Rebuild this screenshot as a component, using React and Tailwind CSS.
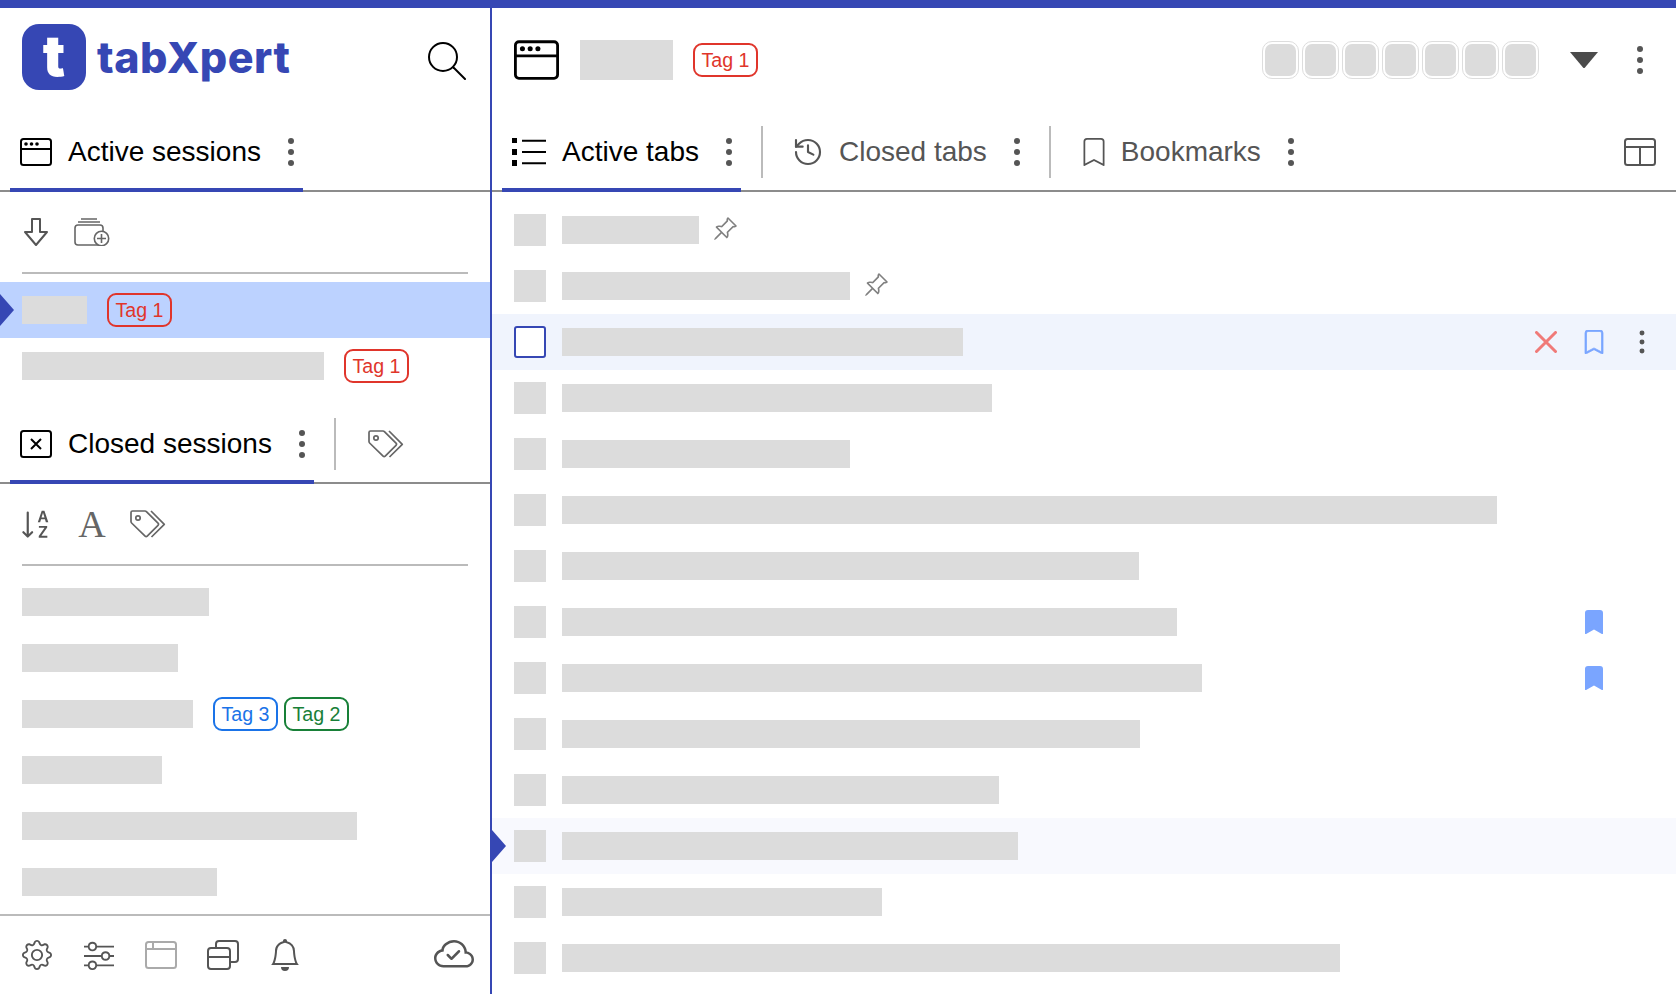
import { BsPinAngle, BsBookmark, BsBookmarkFill, BsGear, BsSliders, BsBell, BsCloudCheck, BsSortAlphaDown } from 'react-icons/bs'
import { History } from 'lucide-react'

function Dots({ className = 'h-[34px] w-6' }) {
  return (
    <svg viewBox="0 0 24 34" className={`shrink-0 fill-[#555] ${className}`}>
      <circle cx="12" cy="6" r="3" />
      <circle cx="12" cy="17" r="3" />
      <circle cx="12" cy="28" r="3" />
    </svg>
  )
}

function WindowIcon({ className = '' }) {
  return (
    <svg viewBox="0 0 32 28" className={`shrink-0 ${className}`} fill="none" stroke="#000" strokeWidth="2">
      <rect x="1" y="1" width="30" height="26" rx="2.5" />
      <path d="M1 11h30" />
      <circle cx="6" cy="6" r="1.8" fill="#000" stroke="none" />
      <circle cx="11.5" cy="6" r="1.8" fill="#000" stroke="none" />
      <circle cx="17" cy="6" r="1.8" fill="#000" stroke="none" />
    </svg>
  )
}

function TagsIcon() {
  return (
    <svg width="36" height="28" viewBox="0 0 36 28" fill="none" stroke="#666" strokeWidth="1.7" strokeLinejoin="round" className="shrink-0">
      <path d="M2.5 1H15a2 2 0 0 1 1.4.6L28 13.2a1.5 1.5 0 0 1 0 2.1L17.2 26.2a1.5 1.5 0 0 1-2.1 0L1.6 13a2 2 0 0 1-.6-1.4V2.5A1.5 1.5 0 0 1 2.5 1Z" />
      <path d="M21 1l13.3 13.3L21.5 27" />
      <circle cx="8" cy="8" r="2.2" />
    </svg>
  )
}

function Tag({ color = 'red', children }) {
  const styles = {
    red: 'border-[#e0352b] text-[#e0352b]',
    blue: 'border-[#1a73e8] text-[#1a73e8]',
    green: 'border-[#188038] text-[#188038]',
  }
  return (
    <span className={`flex h-[34px] w-[65px] shrink-0 items-center justify-center rounded-[9px] border-2 pt-[1px] text-[19.6px] leading-none ${styles[color]}`}>
      {children}
    </span>
  )
}

function Bar({ width, className = '' }) {
  return <div className={`h-7 shrink-0 bg-[#dcdcdc] ${className}`} style={{ width }} />
}

function RowArrow() {
  return (
    <svg width="14" height="32" viewBox="0 0 14 32" className="absolute left-0 top-1/2 -translate-y-1/2 fill-[#3647b4]">
      <path d="M0 0 14 16 0 32Z" />
    </svg>
  )
}

function TabDivider({ className = '' }) {
  return <div className={`mt-[10px] h-[52px] w-[2px] shrink-0 self-start bg-[#bbb] ${className}`} />
}

function Tab({ icon, label, active }) {
  return (
    <div className={`-mb-[2px] flex h-[76px] shrink-0 items-center border-b-4 pl-[10px] ${active ? 'border-[#3647b4] text-black' : 'border-transparent text-[#555]'}`}>
      {icon}
      <span className="ml-4 whitespace-nowrap text-[28px] leading-none">{label}</span>
      <Dots className="ml-[18px] h-[34px] w-6" />
    </div>
  )
}

function Sidebar() {
  const closed = [
    { w: 187 },
    { w: 156 },
    { w: 171, tags: true },
    { w: 140 },
    { w: 335 },
    { w: 195 },
  ]
  return (
    <aside className="flex h-full w-[492px] shrink-0 flex-col border-r-2 border-[#3647b4]">
      <div className="flex h-[108px] shrink-0 items-start justify-between pl-[22px] pr-[24px]">
        <div className="mt-4 flex items-center">
          <div className="flex h-[66px] w-[64px] items-center justify-center rounded-[17px] bg-[#3647b4] font-['Inter',sans-serif] text-[56px] font-black leading-none text-white">
            <span className="-mt-[2px]">t</span>
          </div>
          <span className="ml-[11px] font-['Inter',sans-serif] text-[43px] font-extrabold leading-none tracking-[0.5px] text-[#3647b4]">tabXpert</span>
        </div>
        <svg width="38" height="38" viewBox="0 0 38 38" fill="none" stroke="#000" strokeWidth="2" strokeLinecap="round" className="mt-[34px]">
          <circle cx="15" cy="15" r="14" />
          <path d="M25.5 25.5 37 37" />
        </svg>
      </div>

      <div className="flex h-[76px] shrink-0 border-b-2 border-[#8c8c8c] pl-[10px]">
        <Tab active icon={<WindowIcon className="h-7 w-8" />} label="Active sessions" />
      </div>

      <div className="flex h-[80px] shrink-0 items-center gap-4 pl-4">
        <span className="flex w-10 justify-center">
          <svg width="24" height="28" viewBox="0 0 24 28" fill="none" stroke="#555" strokeWidth="2" strokeLinejoin="round">
            <path d="M8 1h8v13h7L12 27 1 14h7Z" />
          </svg>
        </span>
        <span className="flex w-10 justify-center">
          <svg width="36" height="28" viewBox="0 0 36 28" fill="none" stroke="#666" strokeWidth="1.6">
            <path d="M7 1h16M4 4h22" />
            <rect x="1" y="7" width="28" height="20" rx="3" />
            <circle cx="27.5" cy="20.5" r="7.2" fill="#fff" />
            <path d="M27.5 16v9M23 20.5h9" />
          </svg>
        </span>
      </div>
      <div className="mx-[22px] h-[2px] shrink-0 bg-[#bbb]" />

      <div className="relative mt-2 flex h-14 shrink-0 items-center gap-5 bg-[#bcd2ff] pl-[22px]">
        <RowArrow />
        <Bar width={65} />
        <Tag>Tag 1</Tag>
      </div>
      <div className="flex h-14 shrink-0 items-center gap-5 pl-[22px]">
        <Bar width={302} />
        <Tag>Tag 1</Tag>
      </div>

      <div className="mt-[14px] flex h-[76px] shrink-0 border-b-2 border-[#8c8c8c] pl-[10px]">
        <Tab
          active
          icon={
            <svg viewBox="0 0 32 28" className="h-7 w-8 shrink-0" fill="none" stroke="#000" strokeWidth="2">
              <rect x="1" y="1" width="30" height="26" rx="2.5" />
              <path d="m11 9 10 10M21 9 11 19" />
            </svg>
          }
          label="Closed sessions"
        />
        <TabDivider className="ml-5" />
        <span className="ml-8 mt-[22px]"><TagsIcon /></span>
      </div>

      <div className="flex h-[80px] shrink-0 items-center gap-4 pl-4">
        <span className="flex w-10 justify-center">
          <BsSortAlphaDown className="text-[#555]" size={35} />
        </span>
        <span className="flex w-10 justify-center font-['Liberation_Serif',serif] text-[38px] leading-none text-[#666]">A</span>
        <span className="flex w-10 justify-center">
          <TagsIcon />
        </span>
      </div>
      <div className="mx-[22px] h-[2px] shrink-0 bg-[#bbb]" />

      <div className="mt-2 flex flex-1 flex-col">
        {closed.map((row, i) => (
          <div key={i} className="flex h-14 shrink-0 items-center pl-[22px]">
            <Bar width={row.w} />
            {row.tags && (
              <div className="ml-5 flex gap-[6px]">
                <Tag color="blue">Tag 3</Tag>
                <Tag color="green">Tag 2</Tag>
              </div>
            )}
          </div>
        ))}
      </div>

      <div className="flex h-[80px] shrink-0 items-center border-t-2 border-[#bbb] pl-[21px] pr-[16px]">
        <div className="flex items-center gap-[30px]">
          <span className="flex w-8 justify-center"><BsGear className="text-[#555]" size={30} /></span>
          <span className="flex w-8 justify-center"><BsSliders className="-scale-x-100 text-[#555]" size={30} /></span>
          <span className="flex w-8 justify-center">
            <svg width="32" height="28" viewBox="0 0 32 28" fill="none" stroke="#aaa" strokeWidth="2">
              <rect x="1" y="1" width="30" height="26" rx="2.5" />
              <path d="M1 8h30M8 1v7" />
            </svg>
          </span>
          <span className="flex w-8 justify-center">
            <svg width="32" height="30" viewBox="0 0 32 30" fill="none" stroke="#555" strokeWidth="2">
              <rect x="1" y="8" width="22" height="21" rx="3" />
              <path d="M1 17h22M9 8V4a3 3 0 0 1 3-3h16a3 3 0 0 1 3 3v15a3 3 0 0 1-3 3h-5" />
            </svg>
          </span>
          <span className="flex w-8 justify-center"><BsBell className="text-[#555]" size={32} /></span>
        </div>
        <BsCloudCheck className="ml-auto text-[#555]" size={40} />
      </div>
    </aside>
  )
}

const tabs = [
  { w: 137, pin: true },
  { w: 288, pin: true },
  { w: 401, selected: true },
  { w: 430 },
  { w: 288 },
  { w: 935 },
  { w: 577 },
  { w: 615, saved: true },
  { w: 640, saved: true },
  { w: 578 },
  { w: 437 },
  { w: 456, current: true },
  { w: 320 },
  { w: 778 },
]

function TabRow({ tab }) {
  const bg = tab.selected ? 'bg-[#f0f4fd]' : tab.current ? 'bg-[#f8f9fe]' : ''
  return (
    <div className={`relative flex h-14 shrink-0 items-center pl-[22px] ${bg}`}>
      {tab.current && <RowArrow />}
      {tab.selected ? (
        <div className="h-8 w-8 shrink-0 rounded-[3px] border-2 border-[#3647b4] bg-white" />
      ) : (
        <div className="h-8 w-8 shrink-0 bg-[#dcdcdc]" />
      )}
      <Bar width={tab.w} className="ml-4" />
      {tab.pin && <BsPinAngle className="-mt-[2px] ml-[13px] text-[#808080]" size={26} />}
      {tab.saved && <BsBookmarkFill className="ml-auto mr-[70px] text-[#7aa5ff]" size={24} />}
      {tab.selected && (
        <div className="ml-auto flex items-center pr-[24px]">
          <svg width="22" height="22" viewBox="0 0 22 22" fill="none" stroke="#f07a78" strokeWidth="3" strokeLinecap="round">
            <path d="M1.5 1.5l19 19M20.5 1.5l-19 19" />
          </svg>
          <BsBookmark className="ml-[25px] text-[#7aa5ff]" size={24} stroke="currentColor" strokeWidth={0.5} />
          <Dots className="ml-[26px] h-7 w-5" />
        </div>
      )}
    </div>
  )
}

function Main() {
  return (
    <main className="flex h-full min-w-0 flex-1 flex-col">
      <div className="flex h-[108px] shrink-0 items-center pb-1 pl-[22px] pr-[24px]">
        <WindowIcon className="h-10 w-[45px]" />
        <div className="ml-[21px] h-10 w-[93px] shrink-0 bg-[#dcdcdc]" />
        <div className="ml-5"><Tag>Tag 1</Tag></div>
        <div className="ml-auto flex gap-[3px]">
          {[0, 1, 2, 3, 4, 5, 6].map((i) => (
            <div key={i} className="h-[38px] w-[37px] rounded-[10px] border border-[#ddd] p-[2px]">
              <div className="h-full w-full rounded-[7px] bg-[#dcdcdc]" />
            </div>
          ))}
        </div>
        <svg width="28" height="16" viewBox="0 0 28 16" className="ml-[31px] fill-[#4b4b4b]">
          <path d="M0 0h28L15 15.4a1.4 1.4 0 0 1-2 0Z" />
        </svg>
        <Dots className="ml-[30px] h-[34px] w-6" />
      </div>

      <div className="flex h-[76px] shrink-0 items-start border-b-2 border-[#8c8c8c] pl-[10px] pr-[20px]">
        <Tab
          active
          label="Active tabs"
          icon={
            <svg width="34" height="28" viewBox="0 0 34 28" className="shrink-0">
              <path d="M0 0h5v5H0zM0 11h5v6H0zM0 22h5v6H0z" fill="#000" />
              <path d="M10 2.7h24M10 14h24M10 25.3h24" stroke="#000" strokeWidth="2" />
            </svg>
          }
        />
        <TabDivider className="ml-5" />
        <div className="ml-5">
          <Tab label="Closed tabs" icon={<History className="-mx-[1px] shrink-0 text-[#555]" size={32} strokeWidth={1.6} />} />
        </div>
        <TabDivider className="ml-5" />
        <div className="ml-[22px]">
          <Tab label="Bookmarks" icon={<BsBookmark className="-mx-[3px] shrink-0 text-[#555]" size={28} />} />
        </div>
        <svg width="32" height="28" viewBox="0 0 32 28" fill="none" stroke="#555" strokeWidth="2" className="ml-auto mt-[22px]">
          <rect x="1" y="1" width="30" height="26" rx="2.5" />
          <path d="M1 9h30M16 9v18" />
        </svg>
      </div>

      <div className="mt-[10px] flex flex-col">
        {tabs.map((tab, i) => (
          <TabRow key={i} tab={tab} />
        ))}
      </div>
    </main>
  )
}

export default function App() {
  return (
    <div className="flex h-[994px] w-[1676px] flex-col overflow-hidden bg-white font-['Liberation_Sans',sans-serif]">
      <div className="h-2 shrink-0 bg-[#3647b4]" />
      <div className="flex min-h-0 flex-1">
        <Sidebar />
        <Main />
      </div>
    </div>
  )
}
